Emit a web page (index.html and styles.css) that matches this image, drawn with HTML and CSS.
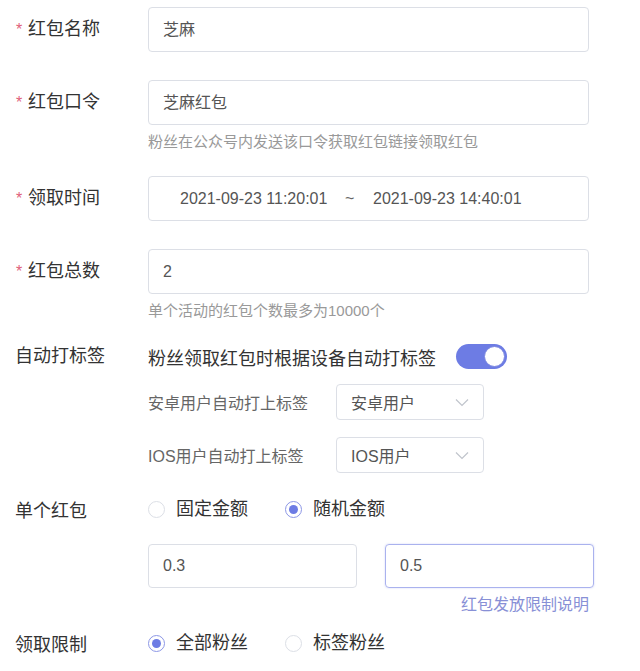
FILE: index.html
```html
<!DOCTYPE html>
<html lang="zh">
<head>
  <meta charset="UTF-8">
  <title>红包设置</title>
  <link rel="stylesheet" href="styles.css">
</head>
<body>
  <form class="form">
    <div class="item">
      <label class="item-label"><span class="req">*</span>红包名称</label>
      <div class="item-body">
        <div class="input">芝麻</div>
      </div>
    </div>

    <div class="item gap-28">
      <label class="item-label"><span class="req">*</span>红包口令</label>
      <div class="item-body">
        <div class="input">芝麻红包</div>
        <div class="hint">粉丝在公众号内发送该口令获取红包链接领取红包</div>
      </div>
    </div>

    <div class="item gap-24">
      <label class="item-label"><span class="req">*</span>领取时间</label>
      <div class="item-body">
        <div class="input range">
          <span class="range-val">2021-09-23 11:20:01</span>
          <span class="range-sep">~</span>
          <span class="range-val">2021-09-23 14:40:01</span>
        </div>
      </div>
    </div>

    <div class="item gap-28">
      <label class="item-label"><span class="req">*</span>红包总数</label>
      <div class="item-body">
        <div class="input">2</div>
        <div class="hint">单个活动的红包个数最多为10000个</div>
      </div>
    </div>

    <div class="item short gap-23">
      <label class="item-label plain">自动打标签</label>
      <div class="item-body">
        <div class="switch-line">
          <span>粉丝领取红包时根据设备自动打标签</span>
          <span class="switch on"><span class="knob"></span></span>
        </div>
        <div class="sub-item sub-first">
          <span class="sub-label">安卓用户自动打上标签</span>
          <div class="select">安卓用户<svg class="arrow" width="14" height="9" viewBox="0 0 14 9"><path d="M1 1.5 L7 7.5 L13 1.5" fill="none" stroke="#c0c4cc" stroke-width="1.2"/></svg></div>
        </div>
        <div class="sub-item sub-second">
          <span class="sub-label">IOS用户自动打上标签</span>
          <div class="select">IOS用户<svg class="arrow" width="14" height="9" viewBox="0 0 14 9"><path d="M1 1.5 L7 7.5 L13 1.5" fill="none" stroke="#c0c4cc" stroke-width="1.2"/></svg></div>
        </div>
      </div>
    </div>

    <div class="item short gap-26">
      <label class="item-label plain">单个红包</label>
      <div class="item-body">
        <div class="radios">
          <span class="radio"><span class="dot"></span>固定金额</span>
          <span class="radio checked"><span class="dot"></span>随机金额</span>
        </div>
        <div class="amounts">
          <div class="input half">0.3</div>
          <div class="input half focus">0.5</div>
        </div>
        <div class="link-line"><a class="link">红包发放限制说明</a></div>
      </div>
    </div>

    <div class="item short gap-18">
      <label class="item-label plain">领取限制</label>
      <div class="item-body">
        <div class="radios">
          <span class="radio checked"><span class="dot"></span>全部粉丝</span>
          <span class="radio"><span class="dot"></span>标签粉丝</span>
        </div>
      </div>
    </div>
  </form>
</body>
</html>
```

FILE: styles.css
```css
html, body { margin: 0; padding: 0; background: #fff; }
body { font-family: 'Liberation Sans', 'Noto Sans CJK SC', sans-serif; color: #333; }

.form { padding-top: 7px; }

.item { display: flex; align-items: flex-start; }
.gap-18 { margin-top: 18px; }
.gap-23 { margin-top: 23px; }
.gap-24 { margin-top: 24px; }
.gap-26 { margin-top: 26px; }
.gap-28 { margin-top: 28px; }

.item-label {
  width: 148px; flex: none; box-sizing: border-box;
  padding-left: 15px; font-size: 18px; line-height: 45px; color: #333;
}
.item.short .item-label { line-height: 25px; }
.req { display: inline-block; width: 13px; color: #e0607a; font-size: 16px; padding-left: 1px; box-sizing: border-box; }

.item-body { flex: none; }

.input {
  width: 441px; height: 45px; box-sizing: border-box;
  border: 1px solid #dcdfe6; border-radius: 4px;
  padding: 0 14px; font-size: 16px; line-height: 43px; color: #555;
}
.input.range { display: flex; padding-left: 31px; white-space: nowrap; }
.range-val { flex: none; width: 148px; }
.range-sep { flex: none; width: 45px; padding-left: 17px; box-sizing: border-box; color: #666; }

.hint { font-size: 15px; line-height: 20px; margin-top: 7px; color: #999; }

.switch-line { display: flex; align-items: center; height: 25px; font-size: 18px; color: #333; }
.switch {
  position: relative; width: 51px; height: 25px; margin-left: 20px;
  border-radius: 13px; background: #dcdfe6; box-sizing: border-box;
}
.switch.on { background: #6d7ce4; }
.knob {
  position: absolute; top: 2px; right: 2px; width: 21px; height: 21px;
  border-radius: 50%; background: #fff; box-sizing: border-box; border: 1px solid #7a86e0;
}

.sub-item { display: flex; align-items: center; }
.sub-first { margin-top: 15px; }
.sub-second { margin-top: 17px; }
.sub-label { width: 188px; font-size: 16px; color: #666; }
.select {
  display: flex; align-items: center; justify-content: space-between;
  width: 148px; height: 36px; box-sizing: border-box;
  border: 1px solid #dcdfe6; border-radius: 4px;
  padding: 0 14px; font-size: 16px; color: #555;
}

.radios { display: flex; height: 25px; align-items: center; font-size: 18px; color: #333; }
.radio { display: flex; align-items: center; margin-right: 37px; line-height: 25px; position: relative; top: -2px; }
.dot {
  width: 17px; height: 17px; border-radius: 50%; box-sizing: border-box;
  border: 1px solid #dcdfe6; margin-right: 11px; position: relative;
}
.radio.checked .dot { border-color: #8d97e6; }
.radio.checked .dot::after {
  content: ''; position: absolute; top: 3px; left: 3px;
  width: 9px; height: 9px; border-radius: 50%; background: #6d7ce4;
}

.amounts { display: flex; gap: 28px; margin-top: 20px; }
.input.half { width: 209px; height: 44px; line-height: 42px; }
.input.focus { border-color: #aab2ee; box-shadow: 0 0 2px rgba(109, 124, 228, 0.35); }

.link-line { width: 441px; text-align: right; margin-top: 7px; line-height: 20px; }
.link { font-size: 16px; color: #8890d6; }
```
